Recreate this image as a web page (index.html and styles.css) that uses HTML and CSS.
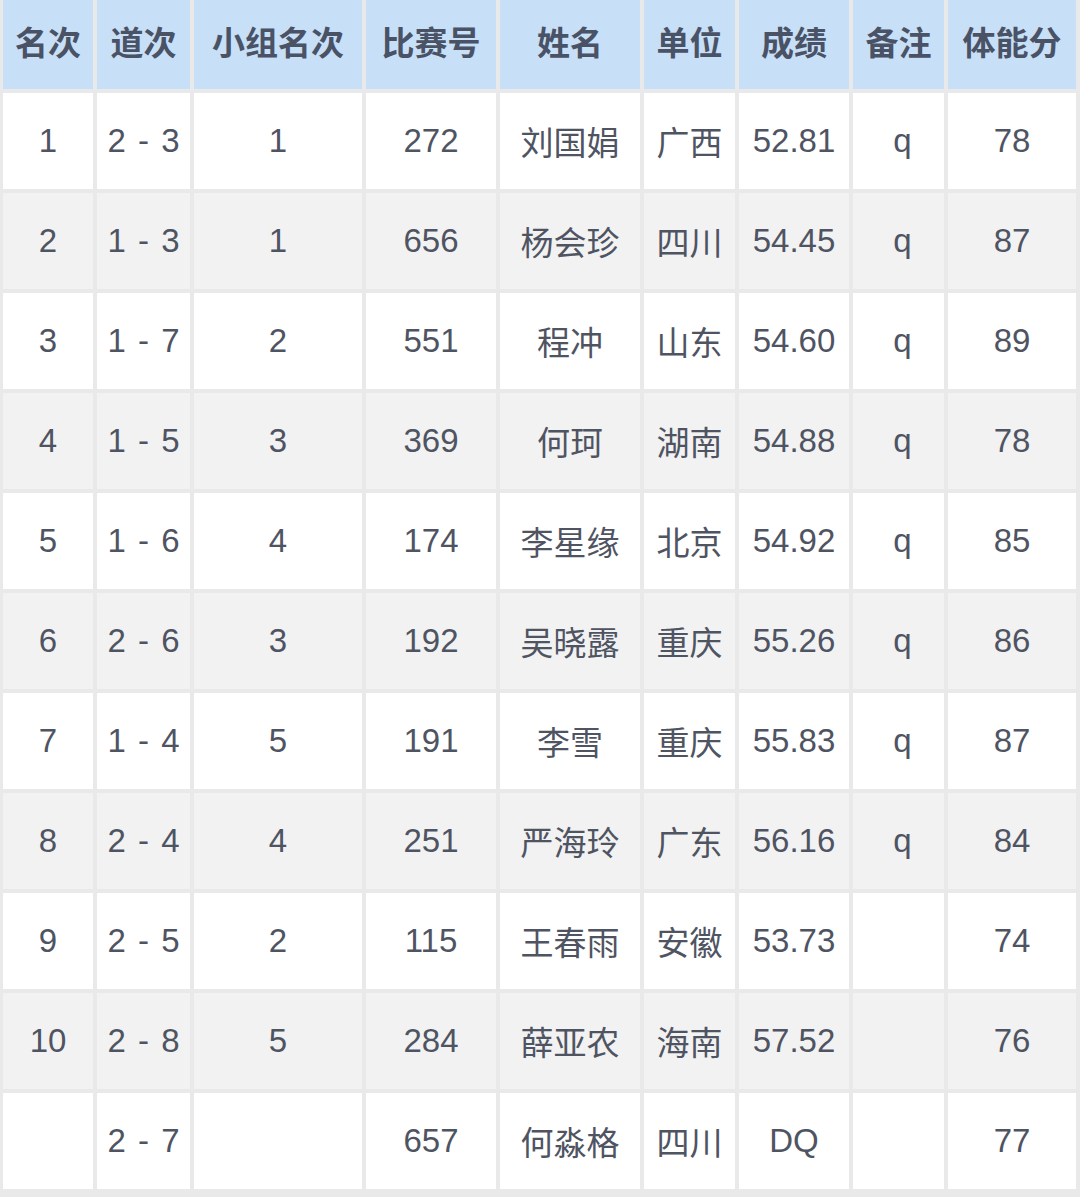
FILE: index.html
```html
<!DOCTYPE html>
<html lang="zh">
<head>
<meta charset="utf-8">
<link rel="stylesheet" href="styles.css">
</head>
<body>
<div class="table">
  <div class="row head">
    <div class="c">名次</div><div class="c">道次</div><div class="c">小组名次</div><div class="c">比赛号</div><div class="c">姓名</div><div class="c">单位</div><div class="c">成绩</div><div class="c">备注</div><div class="c">体能分</div>
  </div>
  <div class="row"><div class="c">1</div><div class="c lane">2 - 3</div><div class="c">1</div><div class="c">272</div><div class="c">刘国娟</div><div class="c">广西</div><div class="c">52.81</div><div class="c note">q</div><div class="c">78</div></div>
  <div class="row alt"><div class="c">2</div><div class="c lane">1 - 3</div><div class="c">1</div><div class="c">656</div><div class="c">杨会珍</div><div class="c">四川</div><div class="c">54.45</div><div class="c note">q</div><div class="c">87</div></div>
  <div class="row"><div class="c">3</div><div class="c lane">1 - 7</div><div class="c">2</div><div class="c">551</div><div class="c">程冲</div><div class="c">山东</div><div class="c">54.60</div><div class="c note">q</div><div class="c">89</div></div>
  <div class="row alt"><div class="c">4</div><div class="c lane">1 - 5</div><div class="c">3</div><div class="c">369</div><div class="c">何珂</div><div class="c">湖南</div><div class="c">54.88</div><div class="c note">q</div><div class="c">78</div></div>
  <div class="row"><div class="c">5</div><div class="c lane">1 - 6</div><div class="c">4</div><div class="c">174</div><div class="c">李星缘</div><div class="c">北京</div><div class="c">54.92</div><div class="c note">q</div><div class="c">85</div></div>
  <div class="row alt"><div class="c">6</div><div class="c lane">2 - 6</div><div class="c">3</div><div class="c">192</div><div class="c">吴晓露</div><div class="c">重庆</div><div class="c">55.26</div><div class="c note">q</div><div class="c">86</div></div>
  <div class="row"><div class="c">7</div><div class="c lane">1 - 4</div><div class="c">5</div><div class="c">191</div><div class="c">李雪</div><div class="c">重庆</div><div class="c">55.83</div><div class="c note">q</div><div class="c">87</div></div>
  <div class="row alt"><div class="c">8</div><div class="c lane">2 - 4</div><div class="c">4</div><div class="c">251</div><div class="c">严海玲</div><div class="c">广东</div><div class="c">56.16</div><div class="c note">q</div><div class="c">84</div></div>
  <div class="row"><div class="c">9</div><div class="c lane">2 - 5</div><div class="c">2</div><div class="c">115</div><div class="c">王春雨</div><div class="c">安徽</div><div class="c">53.73</div><div class="c note"></div><div class="c">74</div></div>
  <div class="row alt"><div class="c">10</div><div class="c lane">2 - 8</div><div class="c">5</div><div class="c">284</div><div class="c">薛亚农</div><div class="c">海南</div><div class="c">57.52</div><div class="c note"></div><div class="c">76</div></div>
  <div class="row"><div class="c"></div><div class="c lane">2 - 7</div><div class="c"></div><div class="c">657</div><div class="c">何淼格</div><div class="c">四川</div><div class="c">DQ</div><div class="c note"></div><div class="c">77</div></div>
</div>
</body>
</html>
```
FILE: styles.css
```css
html, body {
  margin: 0;
  padding: 0;
  background: #e9e9e9;
}
body {
  width: 1080px;
  height: 1197px;
  overflow: hidden;
}
.table {
  display: grid;
  row-gap: 4px;
  padding: 0 4px 0 3px;
  font-family: "Liberation Sans", "Noto Sans CJK SC", sans-serif;
  font-size: 33px;
  color: #4f5462;
}
.row {
  display: grid;
  grid-template-columns: 90px 93px 168px 130px 140px 91px 110px 91px 128px;
  column-gap: 4px;
  height: 96px;
}
.row.head {
  height: 89px;
}
.c {
  display: flex;
  align-items: center;
  justify-content: center;
  background: #ffffff;
  white-space: nowrap;
}
.lane {
  word-spacing: 3px;
}
.note {
  padding-left: 8px;
}
.row.alt .c {
  background: #f2f2f2;
}
.row.head .c {
  background: #c7dff7;
  color: #4a5266;
  font-weight: bold;
  font-family: "Noto Sans CJK SC", sans-serif;
  font-size: 33px;
  padding: 0 0 8px 0;
}
```
